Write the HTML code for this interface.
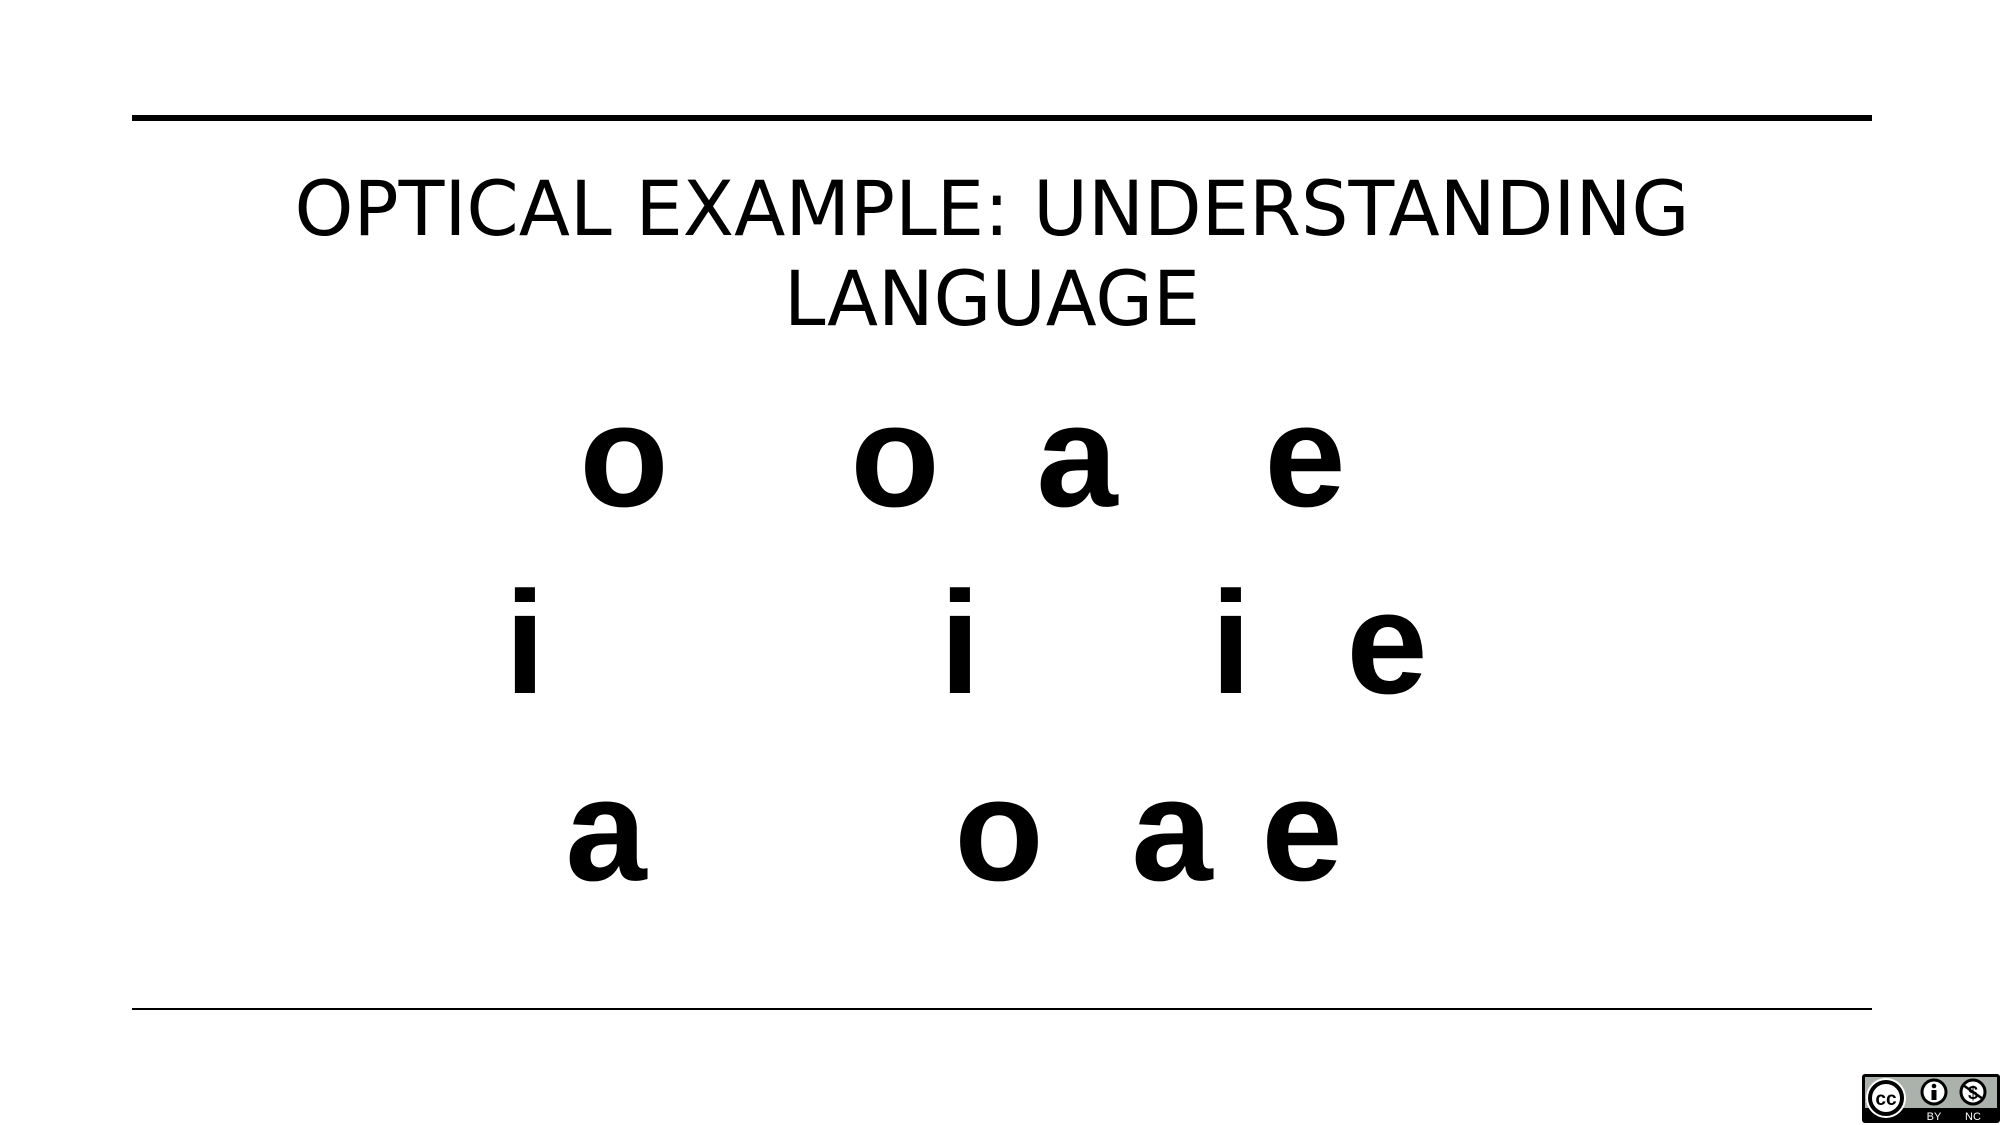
<!DOCTYPE html>
<html><head><meta charset="utf-8"><style>
html,body{margin:0;padding:0;background:#fff;}
body{width:2001px;height:1125px;overflow:hidden;position:relative;}
svg{position:absolute;left:0;top:0;}
</style></head><body>
<svg width="2001" height="1125" viewBox="0 0 2001 1125">
<rect x="132" y="115" width="1740" height="6" fill="#000"/>
<rect x="132" y="1008" width="1740" height="2" fill="#000"/>
<g font-family="DejaVu Sans, sans-serif" font-size="76" fill="#000" text-anchor="middle">
<text x="992" y="235" textLength="1395" lengthAdjust="spacingAndGlyphs">OPTICAL EXAMPLE: UNDERSTANDING</text>
<text x="992" y="325" textLength="416" lengthAdjust="spacingAndGlyphs">LANGUAGE</text>
</g>
<g font-family="Liberation Sans, Arial, sans-serif" font-weight="bold" font-size="146" fill="#000" text-anchor="middle">
<text x="624" y="506">o</text><text x="895" y="506">o</text><text x="1077" y="506">a</text><text x="1305" y="506">e</text>
<text x="525" y="693">i</text><text x="960" y="693">i</text><text x="1231" y="693">i</text><text x="1387" y="693">e</text>
<text x="606" y="880">a</text><text x="999" y="880">o</text><text x="1172" y="880">a</text><text x="1302" y="880">e</text>
</g>
<g>
<rect x="1862" y="1074" width="138" height="49" rx="3" fill="#000"/>
<rect x="1865" y="1077" width="132" height="31" fill="#aab2ab"/>
<circle cx="1886" cy="1098" r="20" fill="#fff"/>
<circle cx="1886" cy="1098" r="16" fill="#fff" stroke="#000" stroke-width="4"/>
<text x="1886" y="1105" font-family="Liberation Sans, sans-serif" font-weight="bold" font-size="19" text-anchor="middle" fill="#000">cc</text>
<circle cx="1934" cy="1092" r="12" fill="#fff" stroke="#000" stroke-width="3"/>
<circle cx="1934" cy="1086" r="2.3" fill="#000"/>
<rect x="1931.5" y="1090" width="5" height="10" fill="#000"/>
<circle cx="1973" cy="1092" r="12" fill="#fff" stroke="#000" stroke-width="3"/>
<text x="1973" y="1099" font-family="Liberation Sans, sans-serif" font-weight="bold" font-size="18" text-anchor="middle" fill="#000">$</text>
<line x1="1963" y1="1085" x2="1983" y2="1099" stroke="#000" stroke-width="2.5"/>
<text x="1934" y="1120" font-family="Liberation Sans, sans-serif" font-size="11" text-anchor="middle" fill="#fff">BY</text>
<text x="1973" y="1120" font-family="Liberation Sans, sans-serif" font-size="11" text-anchor="middle" fill="#fff">NC</text>
</g>
</svg>
</body></html>
